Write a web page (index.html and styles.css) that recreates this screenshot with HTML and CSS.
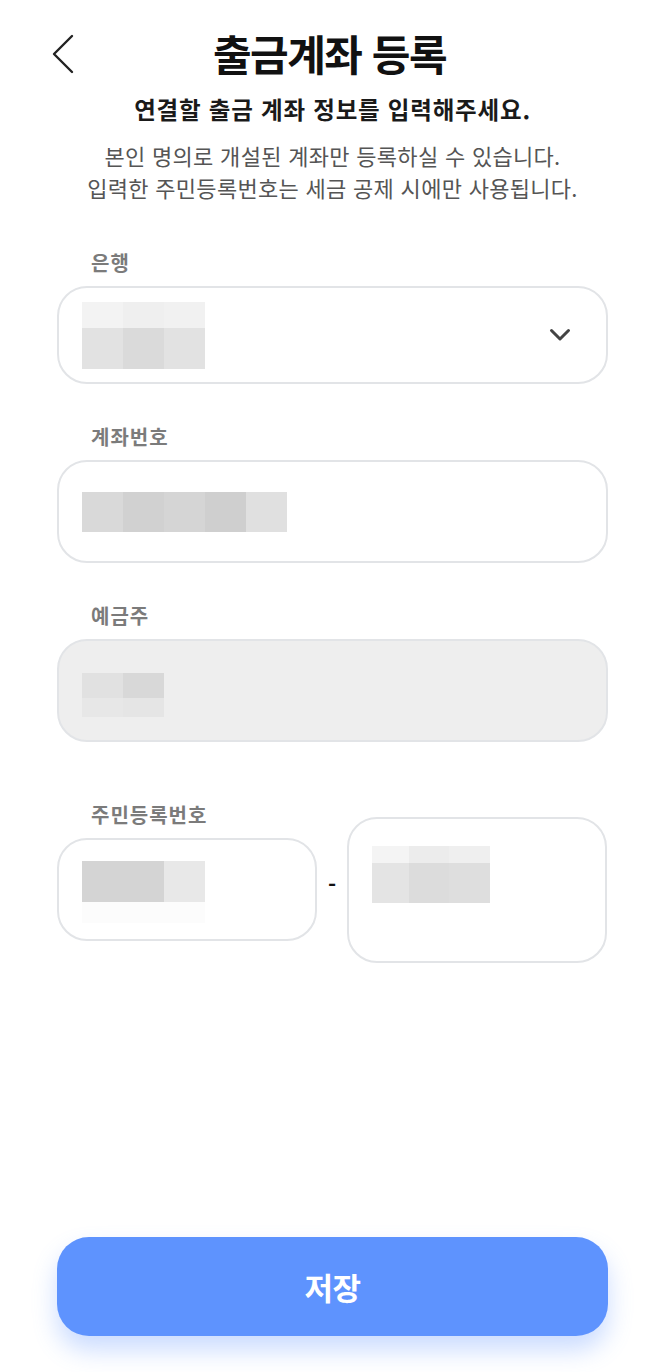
FILE: index.html
```html
<!DOCTYPE html>
<html lang="ko">
<head>
<meta charset="utf-8">
<title>출금계좌 등록</title>
<link rel="stylesheet" href="styles.css">
</head>
<body>
<div class="page">
  <header class="header">
    <button class="back" aria-label="뒤로">
      <svg width="24" height="40" viewBox="0 0 24 40"><path d="M21 2 L3 20 L21 38" fill="none" stroke="#222" stroke-width="2.4" stroke-linecap="round" stroke-linejoin="round"/></svg>
    </button>
    <h1 class="title">출금계좌 등록</h1>
    <span></span>
  </header>

  <p class="subtitle">연결할 출금 계좌 정보를 입력해주세요.</p>
  <p class="desc">본인 명의로 개설된 계좌만 등록하실 수 있습니다.<br>입력한 주민등록번호는 세금 공제 시에만 사용됩니다.</p>

  <section class="field field-first">
    <div class="label">은행</div>
    <div class="box select">
      <div class="mosaic">
        <div class="mrow h26"><i class="c1"></i><i class="c2"></i><i class="c3"></i></div>
        <div class="mrow h41"><i class="c4"></i><i class="c5"></i><i class="c4"></i></div>
      </div>
      <svg class="caret" width="22" height="14" viewBox="0 0 22 14"><path d="M2.5 2.5 L11 11 L19.5 2.5" fill="none" stroke="#444" stroke-width="3" stroke-linecap="round" stroke-linejoin="round"/></svg>
    </div>
  </section>

  <section class="field">
    <div class="label">계좌번호</div>
    <div class="box tall">
      <div class="mosaic">
        <div class="mrow h40"><i class="a1"></i><i class="a2"></i><i class="a3"></i><i class="a4"></i><i class="a5"></i></div>
      </div>
    </div>
  </section>

  <section class="field">
    <div class="label">예금주</div>
    <div class="box tall disabled">
      <div class="mosaic down">
        <div class="mrow h25"><i class="o1"></i><i class="o2"></i></div>
        <div class="mrow h19"><i class="o3"></i><i class="o4"></i></div>
      </div>
    </div>
  </section>

  <section class="field field-rrn">
    <div class="rrn">
      <div class="rrn-left">
        <div class="label">주민등록번호</div>
        <div class="box tall rrn-box">
          <div class="mosaic rrn-mosaic">
            <div class="mrow h41"><i class="r1 w82"></i><i class="r2"></i></div>
            <div class="mrow h21"><i class="r3 w123"></i></div>
          </div>
        </div>
      </div>
      <div class="dash">-</div>
      <div class="box rrn-right">
        <div class="mosaic">
          <div class="mrow h17"><i class="s1 w37"></i><i class="s2 w40"></i><i class="s3 w41"></i></div>
          <div class="mrow h40"><i class="s4 w37"></i><i class="s5 w40"></i><i class="s6 w41"></i></div>
        </div>
      </div>
    </div>
  </section>

  <button class="save">저장</button>
</div>
</body>
</html>
```

FILE: styles.css
```css
* { box-sizing: border-box; }
html, body { margin: 0; padding: 0; background: #fff; }
body {
  font-family: "Noto Sans CJK KR", "Noto Sans", sans-serif;
  color: #111;
}
.page {
  width: 665px;
  min-height: 1372px;
  padding: 0 57px 36px;
  display: flex;
  flex-direction: column;
}
.header {
  display: grid;
  grid-template-columns: 1fr auto 1fr;
  align-items: center;
  height: 70px;
  margin-top: 18px;
  margin-left: -6px;
}
.back {
  justify-self: start;
  background: none;
  border: 0;
  padding: 0;
  width: 24px;
  height: 40px;
  display: flex;
  margin-top: 2px;
}
.title {
  margin: 0;
  font-size: 42px;
  font-weight: 700;
  letter-spacing: -1.5px;
  line-height: 1;
  color: #111;
}
.subtitle {
  margin: 5px 0 0;
  text-align: center;
  font-size: 23.5px;
  font-weight: 700;
  letter-spacing: 0.8px;
  line-height: 32px;
  color: #1a1a1a;
}
.desc {
  margin: 14px 0 0;
  text-align: center;
  font-size: 22px;
  letter-spacing: 0.3px;
  line-height: 32px;
  color: #555;
}
.field { display: flex; flex-direction: column; margin-top: 41px; }
.field-first { margin-top: 48px; }
.label {
  padding-left: 34px;
  font-size: 20px;
  font-weight: 700;
  letter-spacing: 1px;
  line-height: 24px;
  color: #7b7b7b;
  margin-bottom: 11px;
}
.box {
  border: 2px solid #e2e4e7;
  border-radius: 30px;
  background: #fff;
  padding: 0 23px;
  display: flex;
  align-items: center;
}
.select { height: 98px; justify-content: space-between; }
.caret { margin-right: 12px; }
.tall { height: 103px; }
.disabled { background: #eeeeee; }

.mosaic { display: flex; flex-direction: column; }
.mosaic.down { margin-top: 9px; }
.mosaic.rrn-mosaic { margin-top: 5px; }
.mrow { display: flex; }
.mrow i { display: block; width: 41px; height: 100%; }
.h17 { height: 17px; }
.h19 { height: 19px; }
.h21 { height: 21px; }
.h25 { height: 25px; }
.h26 { height: 26px; }
.h40 { height: 40px; }
.h41 { height: 41px; }
.mrow i.w37 { width: 37px; }
.mrow i.w40 { width: 40px; }
.mrow i.w41 { width: 41px; }
.mrow i.w82 { width: 82px; }
.mrow i.w123 { width: 123px; }
.c1 { background: #f3f3f3; }
.c2 { background: #efefef; }
.c3 { background: #f1f1f1; }
.c4 { background: #e2e2e2; }
.c5 { background: #dadada; }
.a1 { background: #d9d9d9; }
.a2 { background: #d1d1d1; }
.a3 { background: #d5d5d5; }
.a4 { background: #cfcfcf; }
.a5 { background: #e0e0e0; }
.o1 { background: #e1e1e1; }
.o2 { background: #d8d8d8; }
.o3 { background: #e7e7e7; }
.o4 { background: #e5e5e5; }
.r1 { background: #d4d4d4; }
.r2 { background: #e8e8e8; }
.r3 { background: #fcfcfc; }
.s1 { background: #f4f4f4; }
.s2 { background: #ececec; }
.s3 { background: #efefef; }
.s4 { background: #e4e4e4; }
.s5 { background: #dcdcdc; }
.s6 { background: #dedede; }

.field-rrn { margin-top: 61px; }
.rrn {
  display: grid;
  grid-template-columns: 260px 30px 260px;
  align-items: end;
}
.rrn-left { display: flex; flex-direction: column; }
.dash {
  align-self: end;
  height: 103px;
  display: flex;
  align-items: center;
  justify-content: center;
  padding-bottom: 14px;
  font-size: 22px;
  font-weight: 700;
  color: #111;
}
.rrn-right {
  height: 146px;
  margin-bottom: -22px;
  align-items: flex-start;
  padding-top: 27px;
}

.save {
  margin-top: auto;
  height: 99px;
  width: 100%;
  border: 0;
  border-radius: 32px;
  background: #5e93fe;
  color: #fff;
  font-family: inherit;
  font-size: 31px;
  font-weight: 700;
  letter-spacing: -0.5px;
  box-shadow: 0 14px 24px rgba(94, 147, 254, 0.32);
}
```
